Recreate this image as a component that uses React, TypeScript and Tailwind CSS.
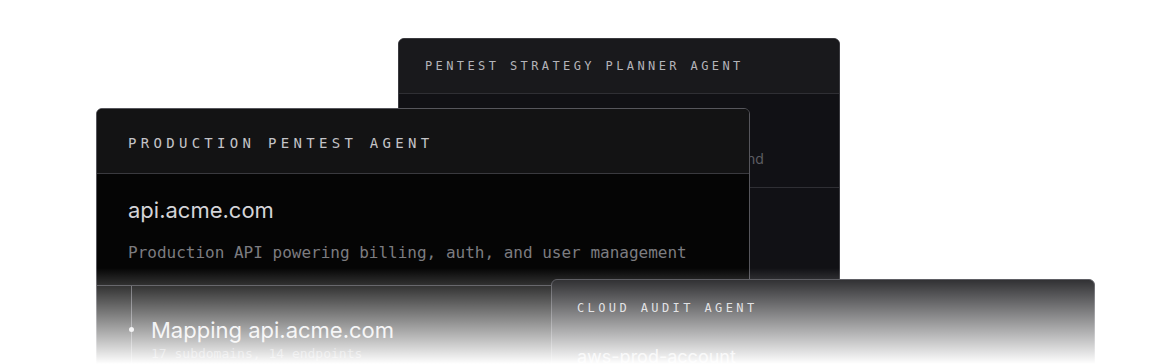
import React from "react";

const mono = { fontFamily: '"DejaVu Sans Mono", "Liberation Mono", monospace' };
const sans = { fontFamily: 'Inter, "Noto Sans", sans-serif' };

function CardLabel({ children, className }: { children: React.ReactNode; className: string }) {
    return (
        <span style={mono} className={"uppercase whitespace-nowrap " + className}>
            {children}
        </span>
    );
}

export default function App() {
    return (
        <div className="relative w-[1170px] h-[364px] overflow-hidden bg-white">
            {/* Back card - strategy planner */}
            <div className="absolute left-[398px] top-[38px] w-[442px] h-[320px] rounded-[6px] border border-[#3a3a3f] bg-[#111115] overflow-hidden">
                <div className="h-[55px] flex items-center px-[26px] bg-[#19191c] border-b border-[#2f2f34]">
                    <CardLabel className="text-[12px] tracking-[3.4px] text-[#b4b4ba]">Pentest Strategy Planner Agent</CardLabel>
                </div>
                <div className="h-[94px] px-[26px] pt-[20px] border-b border-[#2f2f34]">
                    <div style={sans} className="text-[20px] leading-[28px] text-[#d4d4d8]">staging.acme.com</div>
                    <div style={sans} className="mt-[6px] text-[14px] leading-[22px] text-[#5c5c62] whitespace-nowrap">
                        Plans attack paths across staging app services and
                    </div>
                </div>
            </div>

            {/* Front card - production pentest */}
            <div className="absolute left-[96px] top-[108px] w-[654px] h-[300px] rounded-[6px] border border-[#56565c] bg-[#050505] overflow-hidden">
                <div className="h-[65px] flex items-center px-[31px] pt-[4px] bg-[#131314] border-b border-[#3a3a3f]">
                    <CardLabel className="text-[14px] tracking-[4.3px] text-[#c4c4c8]">Production Pentest Agent</CardLabel>
                </div>
                <div className="px-[31px] pt-[22px] pb-[20px] border-b border-[#46464c]">
                    <div style={sans} className="text-[22px] leading-[28px] text-[#d4d4d8]">api.acme.com</div>
                    <div style={mono} className="mt-[17px] text-[16px] leading-[24px] text-[#7c7c80] whitespace-nowrap">
                        Production API powering billing, auth, and user management
                    </div>
                </div>
                <div className="flex pl-[31px] h-[120px]">
                    <div className="w-[7px] flex flex-col items-center">
                        <div className="w-px h-[41px] bg-[#5a5a60]" />
                        <div className="w-[5px] h-[5px] rounded-full bg-[#e4e4e7]" />
                        <div className="w-px flex-1 bg-[#5a5a60]" />
                    </div>
                    <div className="ml-[16px] pt-[30px]">
                        <div style={sans} className="text-[22px] leading-[28px] text-[#e4e4e7] whitespace-nowrap">Mapping api.acme.com</div>
                        <div style={mono} className="mt-[1px] text-[13px] leading-[18px] text-[#7a7a80] whitespace-nowrap">
                            17 subdomains, 14 endpoints
                        </div>
                    </div>
                </div>
            </div>

            {/* Cloud audit card */}
            <div className="absolute left-[551px] top-[279px] w-[544px] h-[200px] rounded-[6px] border border-[#4a4a50] bg-[#141417] overflow-hidden">
                <div className="h-[55px] flex items-center px-[25px]">
                    <CardLabel className="text-[12px] tracking-[3.4px] text-[#d0d0d4]">Cloud Audit Agent</CardLabel>
                </div>
                <div className="px-[25px] pt-[10px]">
                    <div style={sans} className="text-[18px] leading-[24px] text-[#c4c4c8]">aws-prod-account</div>
                </div>
            </div>

            {/* Fade out to page */}
            <div className="absolute inset-x-0 top-[268px] bottom-0 bg-linear-to-b from-white/0 to-white" />
        </div>
    );
}
